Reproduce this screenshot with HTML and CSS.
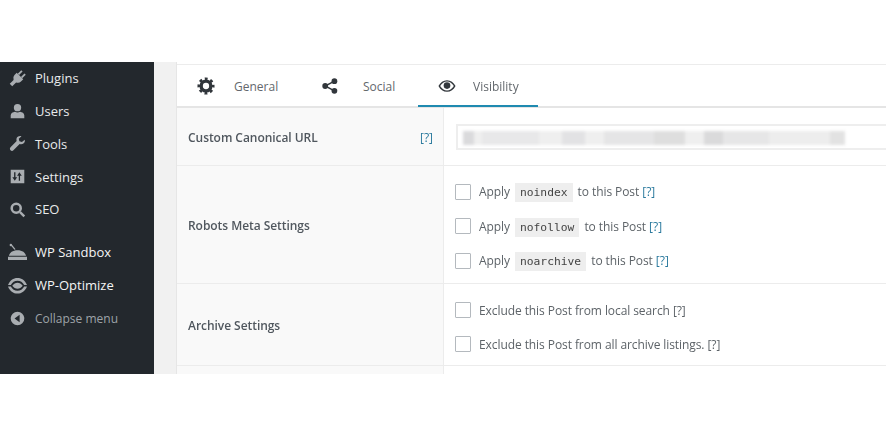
FILE: index.html
```html
<!DOCTYPE html>
<html lang="en">
<head>
<meta charset="utf-8">
<title>Post settings</title>
<link rel="stylesheet" href="styles.css">
</head>
<body>
<div class="shot">
  <nav class="side">
    <ul class="menu">
      <li><svg class="ic" viewBox="-2 -2 24 24"><g transform="rotate(45 10 10)"><rect x="5.500" y="-2" width="2.600" height="7"/><rect x="11.900" y="-2" width="2.600" height="7"/><path d="M3.500 5h13v4.500a6.500 6.500 0 0 1-4 5.800V23h-5v-7.700a6.500 6.500 0 0 1-4-5.800z"/></g></svg>Plugins</li>
      <li><svg class="ic" viewBox="0 0 20 20"><circle cx="10" cy="5.500" r="4.300"/><path d="M2 18v-3.500c0-2.500 2.500-3.800 5-4.200 1.800 1.200 4.200 1.200 6 0 2.500.4 5 1.700 5 4.200V18z"/></svg>Users</li>
      <li><svg class="ic" viewBox="0 0 20 20"><path d="M18.500 5.500l-3.300 2.800-3-1L11.500 4.500 14.700 1.500C12 .8 9.300 2 8.800 4.500c-.2 1 0 1.800.2 2.500L1.800 14.500c-1 1-1 2.500 0 3.500s2.500 1 3.400 0l7.300-7.300c2.800.8 5.300-.3 6-2.700.2-.8.2-1.700 0-2.500z"/></svg>Tools</li>
      <li><svg class="ic" viewBox="0 0 20 20"><path fill-rule="evenodd" d="M2 2h16v16H2zM6 5v6H4l2.800 4 2.800-4H7.600V5zM13 15V9h2l-2.800-4L9.500 9h2v6z"/></svg>Settings</li>
      <li class="seo"><svg class="ic" viewBox="0 0 20 20"><circle cx="8.500" cy="8.500" r="5.300" fill="none" stroke="#a9adb1" stroke-width="3"/><path d="M12 14l2-2 5 5-2 2z"/></svg>SEO</li>
      <li class="gap bright"><svg class="ic wide" viewBox="0 0 20 20"><path d="M0 14.500h20V18H0zM1 13.500c.5-3.500 4-6 9-6s8.500 2.500 9 6zM3 2.500l1-1 4 5-1.200.7z"/><circle cx="3" cy="2" r="1.300"/></svg>WP Sandbox</li>
      <li class="bright"><svg class="ic wide" viewBox="0 0 20 20"><path d="M0 9.500C2 4.500 5.500 2 10 2s8 2.500 10 7.500h-3C15.500 6.500 13 5 10 5S4.500 6.500 3 9.500zM0 11h3c1.500 3 4 4.500 7 4.500s5.500-1.500 7-4.500h3c-2 5-5.500 7.500-10 7.500S2 16 0 11z"/><path d="M4.500 10.300C6 8 8 7 10 7s4 1 5.500 3.300C14 12.500 12 13.500 10 13.500S6 12.500 4.500 10.300z"/></svg>WP-Optimize</li>
      <li class="dim"><svg class="ic" viewBox="0 0 20 20"><path fill-rule="evenodd" d="M10 2a8 8 0 1 1 0 16 8 8 0 0 1 0-16zM12.500 5.500L6.500 10l6 4.500z"/></svg>Collapse menu</li>
    </ul>
  </nav>
  <main class="content">
    <section class="panel">
      <div class="tabs">
        <div class="tab"><svg class="tab-ic" viewBox="0 0 20 20"><circle class="gear-ring" cx="10" cy="10" r="5.400"/><circle class="gear-teeth" cx="10" cy="10" r="8"/></svg><span>General</span></div>
        <div class="tab"><svg class="tab-ic share" viewBox="0 0 20 20"><circle cx="15.500" cy="4" r="3.600"/><circle cx="4" cy="10" r="3.600"/><circle cx="15.500" cy="16" r="3.600"/><path class="share-line" d="M15.500 4L4 10l11.500 6"/></svg><span>Social</span></div>
        <div class="tab active"><svg class="tab-ic" viewBox="0 0 20 20"><path fill-rule="evenodd" d="M10 3.500c4 0 7.500 2.500 9.500 6.500-2 4-5.500 6.500-9.500 6.500S2.500 14 .5 10c2-4 5.500-6.500 9.500-6.500zM10 5C7 5 4.200 7 2.400 10 4.200 13 7 15 10 15s5.800-2 7.600-5C15.800 7 13 5 10 5z"/><circle cx="10" cy="9.500" r="3.700"/></svg><span>Visibility</span></div>
      </div>
      <div class="row row-url">
        <div class="label">Custom Canonical URL<a class="help">[?]</a></div>
        <div class="field"><div class="url-input"><div class="url-blur"></div></div></div>
      </div>
      <div class="row row-robots">
        <div class="label">Robots Meta Settings</div>
        <div class="field opts">
          <label class="opt"><span class="box"></span><span>Apply <code>noindex</code> to this Post <a class="help">[?]</a></span></label>
          <label class="opt"><span class="box"></span><span>Apply <code>nofollow</code> to this Post <a class="help">[?]</a></span></label>
          <label class="opt"><span class="box"></span><span>Apply <code>noarchive</code> to this Post <a class="help">[?]</a></span></label>
        </div>
      </div>
      <div class="row row-archive">
        <div class="label">Archive Settings</div>
        <div class="field opts">
          <label class="opt"><span class="box"></span><span>Exclude this Post from local search [?]</span></label>
          <label class="opt"><span class="box"></span><span>Exclude this Post from all archive listings. [?]</span></label>
        </div>
      </div>
      <div class="row row-rest">
        <div class="label"></div>
        <div class="field"></div>
      </div>
    </section>
  </main>
</div>
</body>
</html>
```
FILE: styles.css
```css
* { box-sizing: border-box; }
html, body { margin: 0; height: 100%; background: #fff; overflow: hidden; }
body { font-family: "Open Sans", "Noto Sans", sans-serif; font-size: 12px; color: #50575e; }
.shot { display: flex; margin-top: 62px; height: 312px; filter: blur(.35px); }
.side { width: 154px; flex: none; background: #23282d; }
.menu { list-style: none; margin: 0; padding: 0; color: #e8eaeb; font-size: 13px; }
.menu li { display: flex; align-items: center; height: 32.800px; padding-left: 9px; gap: 9px; }
.menu .seo { padding-bottom: 1px; }
.menu .gap { margin-top: 10px; }
.menu .bright { color: #f4f5f5; }
.menu .dim { color: #9ea3a8; font-size: 12px; padding-top: 1px; }
.ic { width: 17px; height: 17px; fill: #a9adb1; flex: none; overflow: hidden; }
.ic.wide { width: 19px; height: 19px; margin-left: -1px; margin-right: -1px; }
.content { flex: 1; min-width: 0; background: #f1f1f1; padding-left: 22px; }
.panel { background: #fff; height: 100%; padding-top: 2px; border-left: 1px solid #e6e6e6; }
.tabs { display: flex; height: 44px; border-top: 1px solid #ececec; border-bottom: 2px solid #e5e5e5; background: #fff; }
.tab { height: 42px; display: flex; align-items: center; padding: 2px 0 0 20px; gap: 19px; border-bottom: 2px solid transparent; color: #63686d; font-size: 12px; flex: none; width: 125px; }
.tab:nth-child(2) { width: 116px; gap: 25px; }
.tab.active { border-bottom-color: #1f8ab0; width: 120px; gap: 17px; }
.tab-ic { width: 18px; height: 18px; fill: #32373c; flex: none; }
.tab-ic.share { width: 16px; height: 18px; }
.share-line { fill: none; stroke: #32373c; stroke-width: 1.800; }
.gear-ring { fill: none; stroke: #32373c; stroke-width: 3.800; }
.gear-teeth { fill: none; stroke: #32373c; stroke-width: 3; stroke-dasharray: 3.140 3.140; stroke-dashoffset: 1.570; }
.row { display: flex; border-bottom: 1px solid #ececec; }
.label { width: 267px; flex: none; background: #f9f9f9; border-right: 1px solid #ececec; padding: 2px 10px 0 11px; display: flex; align-items: center; justify-content: space-between; font-weight: 600; color: #50575e; font-size: 12px; letter-spacing: -.05px; }
.field { flex: 1; min-width: 0; }
.row-url { height: 58px; }
.row-robots { height: 118px; }
.row-archive { height: 82px; }
.row-rest { height: 8px; border-bottom: 0; }
.help { color: #2b7a9e; font-weight: 400; font-size: 12px; letter-spacing: 0; }
.row-url .field { padding: 16px 0 0 12px; }
.url-input { height: 26px; border: 2px solid #eeeeee; padding: 5px; background: #fff; margin-right: -2px; }
.url-blur { width: 382px; height: 14px; filter: blur(1.500px); background: linear-gradient(90deg, #dadadc 0 3%, #efefef 3% 5%, #e8e8e9 5% 20%, #efefef 20% 26%, #e2e2e4 26% 32%, #efefef 32% 37%, #e5e5e6 37% 50%, #dedede 50% 58%, #efefef 58% 63%, #dadadb 63% 68%, #e6e6e7 68% 80%, #ededed 80% 96%, #e2e2e2 96% 100%); }
.opts { display: flex; flex-direction: column; }
.row-robots .opts { padding-top: 13px; gap: 9.500px; }
.row-archive .opts { padding-top: 17.500px; gap: 17px; }
.opt { display: flex; align-items: center; gap: 8px; padding-left: 11px; height: 25px; color: #5d6368; font-size: 12px; letter-spacing: -.08px; white-space: pre; }
.row-archive .opt { height: 17px; }
.box { width: 16px; height: 16px; border: 1px solid #b4b9be; background: #fff; flex: none; border-radius: 1px; }
code { font-family: "DejaVu Sans Mono", "Liberation Mono", monospace; font-size: 11.300px; letter-spacing: 0; background: #eeeeee; padding: 3px 5px; color: #444; margin: 0 2px; }
```
